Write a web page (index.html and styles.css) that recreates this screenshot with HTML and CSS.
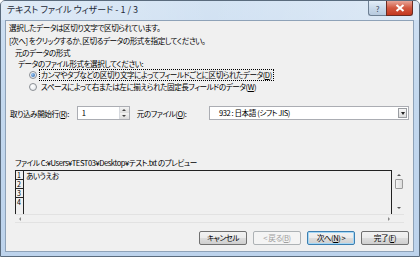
FILE: index.html
```html
<!DOCTYPE html>
<html lang="ja">
  <head>
    <meta charset="UTF-8" />
    <title>テキスト ファイル ウィザード - 1 / 3</title>
    <link rel="stylesheet" href="styles.css">
  </head>
  <body>
    <div class="window">
      <div class="titlebar">
        <span class="title">テキスト ファイル ウィザード - 1 / 3</span>
        <div class="caption-buttons">
          <span class="cap-btn help">?</span>
          <span class="cap-btn close">
            <svg width="10" height="8" viewBox="0 0 10 8">
              <path d="M1.5 1 L8.5 7 M8.5 1 L1.5 7" stroke="#fff" stroke-width="2" />
            </svg>
          </span>
        </div>
      </div>

      <div class="client">
        <div class="line">選択したデータは区切り文字で区切られています。</div>
        <div class="line">[次へ] をクリックするか、区切るデータの形式を指定してください。</div>

        <div class="group">
          <div class="group-title">元のデータの形式</div>
          <div class="group-line">データのファイル形式を選択してください:</div>
          <div class="radio-row">
            <span class="radio checked"></span>
            <span class="radio-label focus">カンマやタブなどの区切り文字によってフィールドごとに区切られたデータ(<u>D</u>)</span>
          </div>
          <div class="radio-row">
            <span class="radio"></span>
            <span class="radio-label">スペースによって右または左に揃えられた固定長フィールドのデータ(<u>W</u>)</span>
          </div>
        </div>

        <div class="import-row">
          <span class="field-label">取り込み開始行(<u>R</u>):</span>
          <div class="spin">
            <span class="spin-value">1</span>
            <div class="spin-buttons">
              <span class="spin-up"></span>
              <span class="spin-down"></span>
            </div>
          </div>
          <span class="field-label origin">元のファイル(<u>O</u>):</span>
          <div class="combo">
            <span class="combo-value">932 : 日本語 (シフト JIS)</span>
            <span class="combo-btn"></span>
          </div>
        </div>

        <div class="preview-label">ファイル C:¥Users¥TEST03¥Desktop¥テスト.txt のプレビュー</div>

        <div class="preview">
          <div class="preview-main">
            <div class="grid">
              <div class="row-nums">
                <div class="num">1</div>
                <div class="num">2</div>
                <div class="num">3</div>
                <div class="num last">4</div>
              </div>
              <div class="data">あいうえお</div>
            </div>
            <div class="vscroll">
              <span class="tri up"></span>
              <span class="thumb"></span>
              <span class="tri down"></span>
            </div>
          </div>
          <div class="hscroll">
            <span class="tri left"></span>
            <span class="tri right"></span>
          </div>
        </div>

        <div class="buttons">
          <span class="btn">キャンセル</span>
          <span class="btn disabled">&lt; 戻る(<u>B</u>)</span>
          <span class="btn default">次へ(<u>N</u>) &gt;</span>
          <span class="btn">完了(<u>F</u>)</span>
        </div>
      </div>
    </div>
  </body>
</html>
```

FILE: styles.css
```css
* {
  margin: 0;
  padding: 0;
  box-sizing: border-box;
}

body {
  width: 420px;
  height: 257px;
  overflow: hidden;
  font-family: "Noto Sans CJK JP", "Noto Sans", sans-serif;
  font-size: 7.6px;
  letter-spacing: -0.45px;
  font-feature-settings: "palt";
  color: #000;
}

u {
  text-decoration: underline;
}

/* Window frame, Aero look */
.window {
  width: 420px;
  height: 257px;
  display: flex;
  flex-direction: column;
  background: linear-gradient(180deg, #cfe0f2 0%, #c3d8ee 40%, #bdd3ec 100%);
  border: 1px solid #5a6b7d;
  border-radius: 5px 5px 0 0;
}

.titlebar {
  height: 19px;
  display: flex;
  justify-content: space-between;
  align-items: flex-start;
  padding-left: 6px;
  background: linear-gradient(90deg, rgba(255,255,255,0.35), rgba(255,255,255,0.1) 50%, rgba(255,255,255,0.3));
}

.title {
  line-height: 18px;
  font-size: 9px;
  letter-spacing: 0;
  color: #1e2a38;
}

.caption-buttons {
  display: flex;
  margin-right: 6px;
}

.cap-btn {
  height: 15px;
  display: flex;
  align-items: center;
  justify-content: center;
  border: 1px solid #6d7f93;
  border-top: none;
}

.help {
  width: 18px;
  font-size: 8px;
  color: #3d4b5c;
  background: linear-gradient(180deg, #e4eef8, #c9d9ea 50%, #b7cadf);
  border-radius: 0 0 0 3px;
  border-right: none;
}

.close {
  width: 27px;
  background: linear-gradient(180deg, #e8a598, #d2573f 50%, #c3381f);
  border-radius: 0 0 3px 0;
  border-color: #6b2c22;
}

/* Dialog body */
.client {
  flex: 1;
  margin: 0 5px 4px 4px;
  border: 1px solid #8ea2b8;
  background: #f0f0f0;
  padding: 0 4px 0 3px;
  display: flex;
  flex-direction: column;
}

.line {
  height: 13px;
  line-height: 13px;
  white-space: nowrap;
}

.group {
  margin-top: 0;
  padding-bottom: 4px;
}

.group-title {
  height: 11px;
  line-height: 11px;
  padding-left: 6px;
}

.group-line {
  height: 11px;
  line-height: 11px;
  padding-left: 9px;
}

.radio-row {
  height: 12px;
  display: flex;
  align-items: center;
  padding-left: 20px;
  white-space: nowrap;
}

.radio {
  width: 8px;
  height: 8px;
  border-radius: 50%;
  border: 1px solid #8b8f94;
  background: radial-gradient(circle at 40% 35%, #fff, #dfe3e8);
  margin-right: 3px;
  display: flex;
  align-items: center;
  justify-content: center;
}

.radio.checked::after {
  content: "";
  width: 4px;
  height: 4px;
  border-radius: 50%;
  background: radial-gradient(circle at 35% 35%, #9cc8f0, #1e5aa8);
}

.radio-label {
  line-height: 10px;
  padding: 0 1px;
}

.radio-label.focus {
  outline: 1px dotted #000;
}

/* Start row and origin */
.import-row {
  margin-top: 9px;
  height: 14px;
  display: flex;
  align-items: center;
  padding-left: 1px;
  white-space: nowrap;
}

.spin {
  width: 53px;
  height: 14px;
  margin-left: 8px;
  display: flex;
  background: #fff;
  border: 1px solid #abadb3;
}

.spin-value {
  flex: 1;
  line-height: 12px;
  padding-left: 4px;
}

.spin-buttons {
  width: 10px;
  display: flex;
  flex-direction: column;
  border-left: 1px solid #d6d9de;
}

.spin-up,
.spin-down {
  flex: 1;
  display: flex;
  justify-content: center;
  align-items: center;
  background: linear-gradient(180deg, #f4f4f4, #dcdcdc);
}

.spin-up::after {
  content: "";
  border: 2px solid transparent;
  border-bottom: 2px solid #444;
  border-top: none;
}

.spin-down::after {
  content: "";
  border: 2px solid transparent;
  border-top: 2px solid #444;
  border-bottom: none;
}

.field-label.origin {
  margin-left: 7px;
}

.combo {
  margin-left: auto;
  width: 200px;
  height: 14px;
  display: flex;
  background: #fff;
  border: 1px solid #abadb3;
}

.combo-value {
  flex: 1;
  line-height: 12px;
  padding-left: 9px;
}

.combo-btn {
  width: 9px;
  margin: 1px;
  border: 1px solid #9a9da2;
  background: linear-gradient(180deg, #f7f7f7, #dddddd);
  display: flex;
  justify-content: center;
  align-items: center;
}

.combo-btn::after {
  content: "";
  border: 2px solid transparent;
  border-top: 3px solid #222;
  border-bottom: none;
}

/* Preview */
.preview-label {
  margin-top: 37px;
  height: 12px;
  line-height: 12px;
  padding-left: 6px;
  white-space: nowrap;
}

.preview {
  margin: 1px 5px 0 6px;
  height: 53px;
  display: flex;
  flex-direction: column;
  border-bottom: 1px solid #e2e2e2;
}

.preview-main {
  flex: 1;
  display: flex;
}

.grid {
  flex: 1;
  display: flex;
  border-top: 1px solid #222;
  border-right: 1px solid #222;
  margin-right: 2px;
}

.row-nums {
  width: 9px;
  display: flex;
  flex-direction: column;
  border-left: 1px solid #222;
  border-right: 1px solid #222;
}

.num {
  height: 9px;
  line-height: 8px;
  font-size: 7px;
  padding-left: 1px;
  border-bottom: 1px solid #222;
}

.num.last {
  border-bottom: none;
}

.data {
  padding-left: 2px;
  line-height: 10px;
}

.vscroll {
  width: 10px;
  display: flex;
  flex-direction: column;
  align-items: center;
  padding: 4px 0 5px;
}

.tri {
  width: 0;
  height: 0;
  border: 2px solid transparent;
}

.tri.up {
  border-bottom: 2px solid #555;
  border-top: none;
}

.tri.down {
  margin-top: auto;
  border-top: 2px solid #555;
  border-bottom: none;
}

.tri.left {
  border-right: 2px solid #888;
  border-left: none;
}

.tri.right {
  border-left: 2px solid #888;
  border-right: none;
}

.thumb {
  width: 8px;
  height: 10px;
  margin-top: 3px;
  border: 1px solid #9b9b9b;
  border-radius: 1px;
  background: linear-gradient(90deg, #f6f6f6, #dcdcdc);
}

.hscroll {
  height: 8px;
  display: flex;
  justify-content: space-between;
  align-items: center;
  padding: 0 14px 0 4px;
  border-top: 1px solid #e2e2e2;
}

/* Buttons */
.buttons {
  margin-top: 8px;
  display: flex;
  justify-content: flex-end;
  gap: 6px;
}

.btn {
  width: 48px;
  height: 14px;
  line-height: 12px;
  text-align: center;
  border: 1px solid #707070;
  border-radius: 2px;
  background: linear-gradient(180deg, #f2f2f2 0%, #ebebeb 50%, #dddddd 51%, #cfcfcf 100%);
  white-space: nowrap;
}

.btn.disabled {
  color: #a0a0a0;
  border-color: #adb2b5;
  background: #f4f4f4;
}

.btn.default {
  border-color: #3c7fb1;
  box-shadow: inset 0 0 0 1px #a6d8f6;
}
```
